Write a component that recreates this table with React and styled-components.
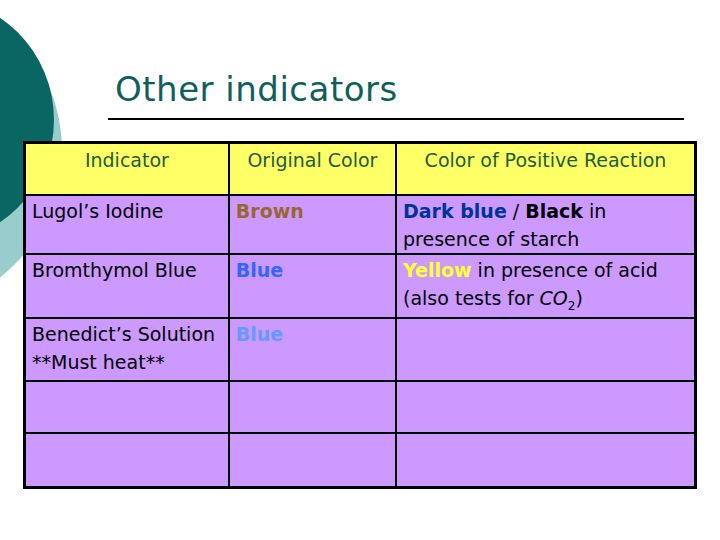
import styled, { createGlobalStyle } from "styled-components";

const GlobalStyle = createGlobalStyle`
  html, body {
    margin: 0;
    padding: 0;
    background: #fff;
  }
`;

const Slide = styled.div`
  position: relative;
  width: 720px;
  height: 540px;
  overflow: hidden;
  padding-top: 69px;
  box-sizing: border-box;
  font-family: "DejaVu Sans", "Open Sans", sans-serif;
`;

const Decor = styled.svg`
  position: absolute;
  left: 0;
  top: 0;
  z-index: 0;
`;

const Title = styled.h1`
  position: relative;
  margin: 0 0 0 115px;
  font-size: 34px;
  font-weight: normal;
  line-height: 40px;
  color: #0f5f5c;
  letter-spacing: 0.5px;
`;

const Rule = styled.div`
  position: relative;
  margin: 9px 0 0 108px;
  width: 576px;
  height: 2px;
  background: #000;
`;

const Table = styled.table`
  position: relative;
  margin: 21px 0 0 23px;
  width: 674px;
  table-layout: fixed;
  border-collapse: collapse;
  border: 3px solid #000;
  font-size: 19px;
  line-height: 28px;
`;

const Head = styled.th`
  height: 48px;
  background: #ffff66;
  border: 2px solid #000;
  color: #1b5e3a;
  font-weight: normal;
  text-align: center;
  vertical-align: top;
  padding: 2px 2px 0;
  white-space: nowrap;
`;

const Row = styled.tr`
  height: ${(p) => p.$h}px;
`;

const Cell = styled.td`
  background: #cc99ff;
  border: 2px solid #000;
  color: #000;
  vertical-align: top;
  padding: 1px 5px 0 6px;
  white-space: nowrap;
`;

const Strong = styled.b`
  color: ${(p) => p.color};
  font-weight: bold;
`;

const Sub = styled.sub`
  font-size: 12px;
  line-height: 0;
`;

const rows = [
  {
    name: ["Lugol’s Iodine"],
    original: { text: "Brown", color: "#996633" },
    reaction: (
      <>
        <Strong color="#003399">Dark blue</Strong> / <Strong color="#000">Black</Strong> in
        <br />
        presence of starch
      </>
    ),
    height: 57,
  },
  {
    name: ["Bromthymol Blue"],
    original: { text: "Blue", color: "#3366ff" },
    reaction: (
      <>
        <Strong color="#ffff33">Yellow</Strong> in presence of acid
        <br />
        (also tests for <i>CO</i>
        <Sub>2</Sub>)
      </>
    ),
    height: 64,
  },
  {
    name: ["Benedict’s Solution", "**Must heat**"],
    original: { text: "Blue", color: "#6699ff" },
    reaction: null,
    height: 63,
  },
  { name: [], original: null, reaction: null, height: 52 },
  { name: [], original: null, reaction: null, height: 54 },
];

const App = () => {
  return (
    <Slide>
      <GlobalStyle />
      <Decor width="180" height="300" viewBox="0 0 180 300">
        <circle cx="-100" cy="150" r="162" fill="#99cccc" />
        <circle cx="-70" cy="120" r="124" fill="#0a6663" />
      </Decor>
      <Title>Other indicators</Title>
      <Rule />
      <Table>
        <colgroup>
          <col style={{ width: 204 }} />
          <col style={{ width: 167 }} />
          <col style={{ width: 299 }} />
        </colgroup>
        <thead>
          <tr>
            <Head>Indicator</Head>
            <Head>Original Color</Head>
            <Head>Color of Positive Reaction</Head>
          </tr>
        </thead>
        <tbody>
          {rows.map((row, i) => (
            <Row key={i} $h={row.height}>
              <Cell>
                {row.name.map((line, j) => (
                  <div key={j}>{line}</div>
                ))}
              </Cell>
              <Cell>
                {row.original && (
                  <Strong color={row.original.color}>{row.original.text}</Strong>
                )}
              </Cell>
              <Cell>{row.reaction}</Cell>
            </Row>
          ))}
        </tbody>
      </Table>
    </Slide>
  );
};

export default App;
